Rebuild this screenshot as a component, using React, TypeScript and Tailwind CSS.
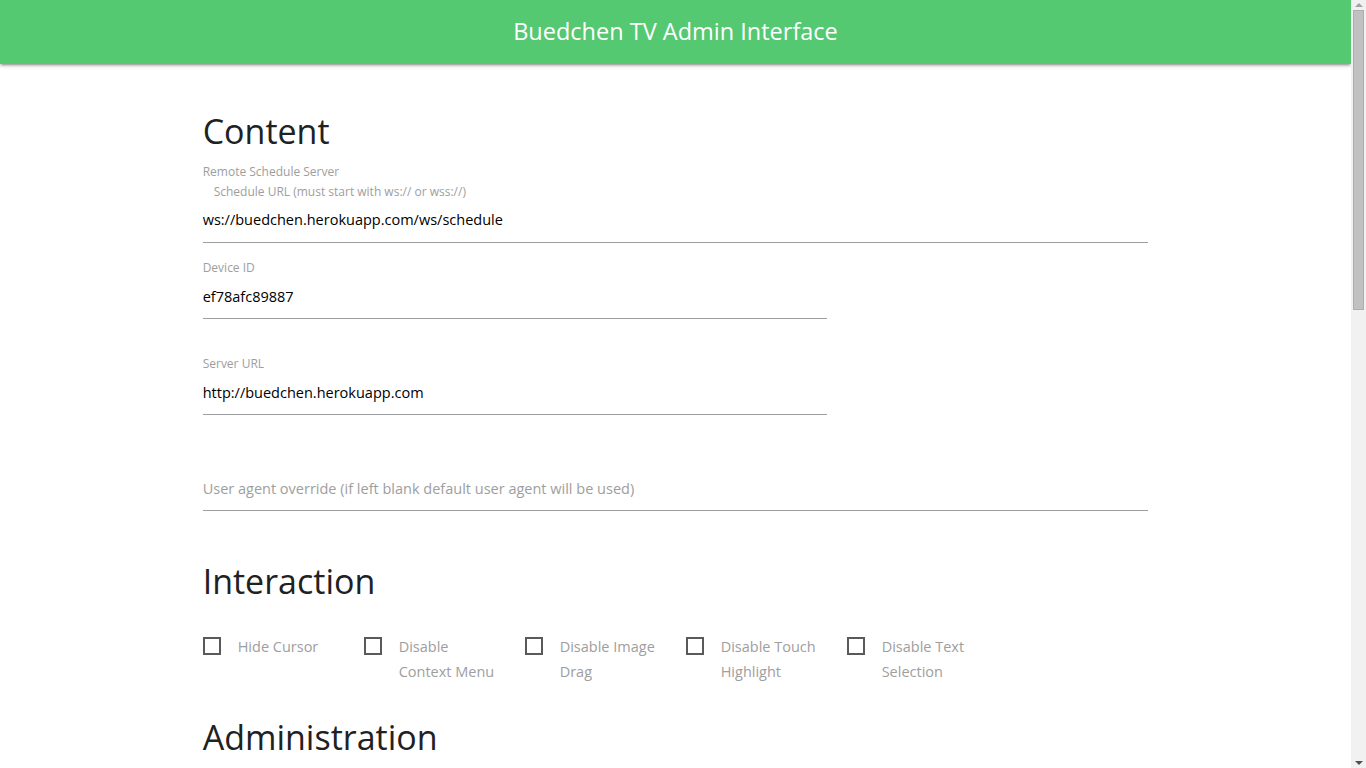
const font = { fontFamily: '"Open Sans", "Noto Sans", sans-serif' };

function Field({ label, value, placeholder, wide }: { label?: string; value?: string; placeholder?: string; wide?: boolean }) {
  return (
    <div className={wide ? "w-full" : "w-[66%]"}>
      <div className="text-[12px] leading-[14px] text-[#9e9e9e] h-[14px]">{label}</div>
      <div className="h-[44px] border-b border-[#9e9e9e] flex items-center text-[14.5px] text-black">
        {value ? value : <span className="text-[#9e9e9e]">{placeholder}</span>}
      </div>
    </div>
  );
}

function Check({ lines }: { lines: string[] }) {
  return (
    <div className="w-[161px] flex shrink-0">
      <div className="w-[18px] h-[18px] mt-[3px] border-2 border-[#5a5a5a] shrink-0" />
      <div className="ml-[17px] text-[14.5px] leading-[25px] text-[#9e9e9e]">
        {lines.map((l) => (
          <div key={l}>{l}</div>
        ))}
      </div>
    </div>
  );
}

function Scrollbar() {
  return (
    <div className="w-[15px] shrink-0 bg-[#f1f1f1] flex flex-col items-center">
      <div className="h-[10px] flex items-center justify-center">
        <div className="w-0 h-0 border-x-[4px] border-x-transparent border-b-[4px] border-b-[#a3a3a3]" />
      </div>
      <div className="w-[11px] h-[300px] bg-[#c1c1c1] border border-[#adadad]" />
      <div className="flex-1" />
      <div className="h-[10px] flex items-center justify-center">
        <div className="w-0 h-0 border-x-[4px] border-x-transparent border-t-[4px] border-t-[#505050]" />
      </div>
    </div>
  );
}

export default function App() {
  return (
    <div style={font} className="h-screen flex bg-white overflow-hidden">
      <div className="flex-1 overflow-hidden">
        <header className="h-16 bg-[#55c872] flex items-center justify-center shadow-[0_2px_2px_0_rgba(0,0,0,0.14),0_3px_1px_-2px_rgba(0,0,0,0.12),0_1px_5px_0_rgba(0,0,0,0.2)]">
          <h1 className="text-[23.5px] text-white">Buedchen TV Admin Interface</h1>
        </header>

        <main className="w-[70%] mx-auto pb-[600px]">
          <h2 className="text-[34px] leading-[38px] text-[#212121] mt-[48px]">Content</h2>

          <div className="mt-[15px]">
            <div className="text-[12px] leading-[14px] text-[#9e9e9e]">Remote Schedule Server</div>
            <div className="text-[12px] leading-[14px] text-[#9e9e9e] ml-[11px] mt-[6px]">Schedule URL (must start with ws:// or wss://)</div>
            <div className="h-[44px] border-b border-[#9e9e9e] flex items-center pb-[2px] text-[14.5px] text-black">
              ws://buedchen.herokuapp.com/ws/schedule
            </div>
          </div>

          <div className="mt-[18px]">
            <Field label="Device ID" value="ef78afc89887" />
          </div>
          <div className="mt-[38px]">
            <Field label="Server URL" value="http://buedchen.herokuapp.com" />
          </div>
          <div className="mt-[38px]">
            <Field wide placeholder="User agent override (if left blank default user agent will be used)" />
          </div>

          <h2 className="text-[34px] leading-[38px] text-[#212121] mt-[51px]">Interaction</h2>
          <div className="flex mt-[34px]">
            <Check lines={["Hide Cursor"]} />
            <Check lines={["Disable", "Context Menu"]} />
            <Check lines={["Disable Image", "Drag"]} />
            <Check lines={["Disable Touch", "Highlight"]} />
            <Check lines={["Disable Text", "Selection"]} />
          </div>

          <h2 className="text-[34px] leading-[38px] text-[#212121] mt-[34px]">Administration</h2>
          <div className="mt-[20px]">
            <Field label="Admin Password" value="••••••••" />
          </div>
        </main>
      </div>
      <Scrollbar />
    </div>
  );
}
